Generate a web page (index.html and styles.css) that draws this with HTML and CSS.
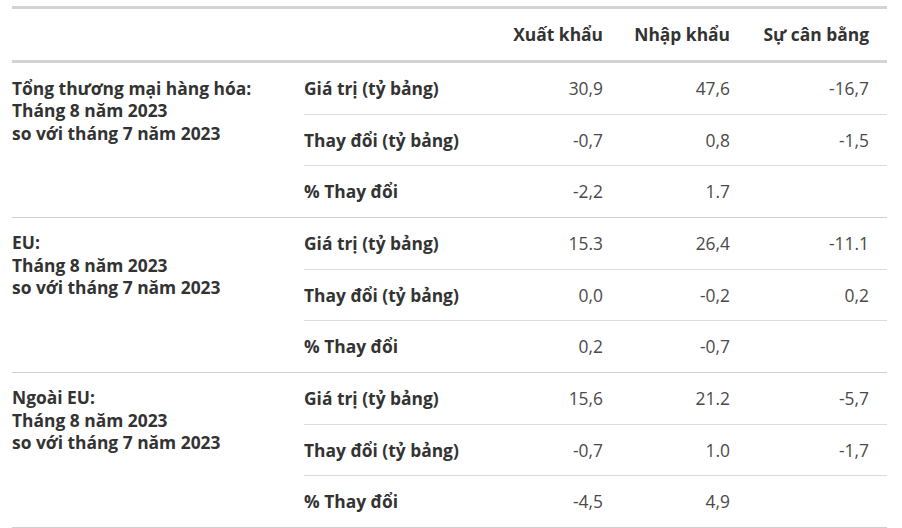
FILE: index.html
```html
<!DOCTYPE html>
<html lang="vi">
<head>
<meta charset="utf-8">
<title>Thương mại hàng hóa</title>
<link rel="stylesheet" href="styles.css">
</head>
<body>
<table class="trade">
  <colgroup>
    <col class="c-group">
    <col class="c-label">
    <col class="c-num1">
    <col class="c-num2">
    <col class="c-num3">
  </colgroup>
  <thead>
    <tr>
      <th></th>
      <th></th>
      <th class="num">Xuất khẩu</th>
      <th class="num">Nhập khẩu</th>
      <th class="num">Sự cân bằng</th>
    </tr>
  </thead>
  <tbody>
    <tr>
      <th rowspan="3" class="group">Tổng thương mại hàng hóa:<br>Tháng 8 năm 2023<br>so với tháng 7 năm 2023</th>
      <th class="label">Giá trị (tỷ bảng)</th>
      <td class="num">30,9</td>
      <td class="num">47,6</td>
      <td class="num">-16,7</td>
    </tr>
    <tr>
      <th class="label">Thay đổi (tỷ bảng)</th>
      <td class="num">-0,7</td>
      <td class="num">0,8</td>
      <td class="num">-1,5</td>
    </tr>
    <tr class="last">
      <th class="label">% Thay đổi</th>
      <td class="num">-2,2</td>
      <td class="num">1.7</td>
      <td class="num"></td>
    </tr>
  </tbody>
  <tbody>
    <tr>
      <th rowspan="3" class="group">EU:<br>Tháng 8 năm 2023<br>so với tháng 7 năm 2023</th>
      <th class="label">Giá trị (tỷ bảng)</th>
      <td class="num">15.3</td>
      <td class="num">26,4</td>
      <td class="num">-11.1</td>
    </tr>
    <tr>
      <th class="label">Thay đổi (tỷ bảng)</th>
      <td class="num">0,0</td>
      <td class="num">-0,2</td>
      <td class="num">0,2</td>
    </tr>
    <tr class="last">
      <th class="label">% Thay đổi</th>
      <td class="num">0,2</td>
      <td class="num">-0,7</td>
      <td class="num"></td>
    </tr>
  </tbody>
  <tbody>
    <tr>
      <th rowspan="3" class="group">Ngoài EU:<br>Tháng 8 năm 2023<br>so với tháng 7 năm 2023</th>
      <th class="label">Giá trị (tỷ bảng)</th>
      <td class="num">15,6</td>
      <td class="num">21.2</td>
      <td class="num">-5,7</td>
    </tr>
    <tr>
      <th class="label">Thay đổi (tỷ bảng)</th>
      <td class="num">-0,7</td>
      <td class="num">1.0</td>
      <td class="num">-1,7</td>
    </tr>
    <tr class="last">
      <th class="label">% Thay đổi</th>
      <td class="num">-4,5</td>
      <td class="num">4,9</td>
      <td class="num"></td>
    </tr>
  </tbody>
</table>
</body>
</html>
```

FILE: styles.css
```css
html, body {
  margin: 0;
  padding: 0;
  background: #ffffff;
}

body {
  padding: 6px 0 0 12px;
  font-family: "Open Sans", "Noto Sans", "DejaVu Sans", sans-serif;
  color: #333333;
}

.trade {
  width: 875px;
  border-collapse: collapse;
  table-layout: fixed;
  font-size: 17.4px;
  line-height: 22.5px;
}

.c-group { width: 292px; }
.c-label { width: 176px; }
.c-num1 { width: 141px; }
.c-num2 { width: 127px; }
.c-num3 { width: 139px; }

.trade thead th {
  height: 51px;
  padding: 0 18px 0 0;
  border-top: 3px solid #d3d3d3;
  border-bottom: 3px solid #d3d3d3;
  font-weight: 700;
  color: #333333;
  vertical-align: middle;
}

.trade th,
.trade td {
  text-align: left;
}

.trade .num {
  text-align: right;
  padding-right: 18px;
}

.trade tbody td,
.trade tbody .label {
  height: 50.67px;
  padding-top: 0;
  padding-bottom: 0;
  border-bottom: 1px solid #dcdcdc;
  vertical-align: middle;
}

.trade tbody .label {
  padding-left: 0;
  font-weight: 700;
  color: #333333;
}

.trade tbody td {
  font-weight: 400;
  color: #4a4a4a;
}

.trade tbody tr.last td,
.trade tbody tr.last .label {
  border-bottom: 1px solid #cfcfcf;
}

.trade .group {
  padding: 13.5px 0 0 0;
  vertical-align: top;
  font-weight: 700;
  color: #333333;
  border-bottom: 1px solid #cfcfcf;
}
```
